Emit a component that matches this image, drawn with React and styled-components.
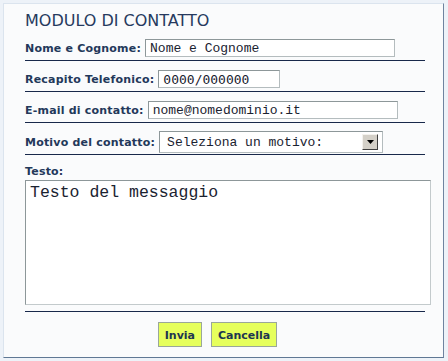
import React from 'react';
import styled, { createGlobalStyle } from 'styled-components';

const GlobalStyle = createGlobalStyle`
    body {
        margin: 0;
        background: #edf2f8;
        font-family: "DejaVu Sans", Verdana, sans-serif;
    }
`;

const App = () => {
    return (
        <>
            <GlobalStyle />
            <Panel>
                <Title>MODULO DI CONTATTO</Title>
                <Row>
                    <Label>Nome e Cognome:</Label>
                    <TextInput width={250} defaultValue="Nome e Cognome" />
                </Row>
                <Row>
                    <Label>Recapito Telefonico:</Label>
                    <TextInput width={122} sans defaultValue="0000/000000" />
                </Row>
                <Row>
                    <Label>E-mail di contatto:</Label>
                    <TextInput width={250} defaultValue="nome@nomedominio.it" />
                </Row>
                <Row tall>
                    <Label>Motivo del contatto:</Label>
                    <SelectBox>
                        <SelectText>Seleziona un motivo:</SelectText>
                        <ArrowButton>
                            <svg width="7" height="4" viewBox="0 0 7 4">
                                <path d="M0 0h7L3.5 4z" fill="#000" />
                            </svg>
                        </ArrowButton>
                    </SelectBox>
                </Row>
                <TextLabel>Testo:</TextLabel>
                <MessageArea defaultValue="Testo del messaggio" />
                <Rule />
                <Actions>
                    <ActionButton type="button">Invia</ActionButton>
                    <ActionButton type="button">Cancella</ActionButton>
                </Actions>
            </Panel>
        </>
    );
};

export default App;

const Panel = styled.div`
    margin: 3px;
    width: 441px;
    box-sizing: border-box;
    padding: 8px 0 10px 21px;
    background: #fafbfc;
    border: 1px solid;
    border-color: #dbe4ee #6f839f #5f7894 #dbe4ee;
`;

const Title = styled.div`
    font-size: 16px;
    line-height: 18px;
    color: #263a5e;
    font-weight: normal;
`;

const Row = styled.div`
    display: flex;
    align-items: center;
    gap: 4px;
    width: 400px;
    padding: ${(p) => (p.tall ? '8px 0 1px' : '9px 0 3px')};
    border-bottom: 1px solid #18284a;
`;

const Label = styled.span`
    font-size: 11px;
    font-weight: bold;
    letter-spacing: 0.2px;
    color: #23385a;
    white-space: nowrap;
`;

const TextInput = styled.input`
    width: ${(p) => p.width}px;
    height: 18px;
    box-sizing: border-box;
    margin: 0;
    padding: 0 4px;
    border: 1px solid;
    border-color: #8d9799 #b4bcbe #b4bcbe #8d9799;
    background: #fff;
    color: #1a2230;
    font-family: ${(p) => (p.sans ? '"DejaVu Sans Mono", monospace' : '"Liberation Mono", "Courier New", monospace')};
    font-size: 13px;
    outline: none;
`;

const SelectBox = styled.div`
    display: flex;
    align-items: center;
    width: 224px;
    height: 22px;
    box-sizing: border-box;
    padding: 2px 4px 2px 7px;
    border: 1px solid;
    border-color: #8d9799 #b4bcbe #b4bcbe #8d9799;
    background: #fff;
`;

const SelectText = styled.span`
    flex: 1;
    font-family: "Liberation Mono", "Courier New", monospace;
    font-size: 13px;
    color: #1a2230;
`;

const ArrowButton = styled.span`
    display: flex;
    align-items: center;
    justify-content: center;
    width: 16px;
    height: 16px;
    box-sizing: border-box;
    background: #d4d0c8;
    border: 1px solid;
    border-color: #f4f2ee #404040 #404040 #f4f2ee;
`;

const TextLabel = styled(Label)`
    display: block;
    margin-top: 10px;
    line-height: 14px;
`;

const MessageArea = styled.textarea`
    display: block;
    width: 406px;
    height: 125px;
    box-sizing: border-box;
    margin: 1px 0 0;
    padding: 2px 4px;
    border: 1px solid;
    border-color: #8d9799 #c3cacc #c3cacc #8d9799;
    background: #fff;
    color: #1a2230;
    font-family: "Liberation Mono", "Courier New", monospace;
    font-size: 16.5px;
    resize: none;
    outline: none;
`;

const Rule = styled.div`
    width: 400px;
    margin-top: 6px;
    border-top: 1px solid #18284a;
`;

const Actions = styled.div`
    display: flex;
    justify-content: center;
    gap: 9px;
    width: 385px;
    margin-top: 10px;
`;

const ActionButton = styled.button`
    height: 25px;
    margin: 0;
    padding: 2px 6px 0;
    background: #e6ff5c;
    border: 1px solid #9aa79a;
    color: #1d3550;
    font-family: "DejaVu Sans", Verdana, sans-serif;
    font-size: 11px;
    font-weight: bold;
`;
